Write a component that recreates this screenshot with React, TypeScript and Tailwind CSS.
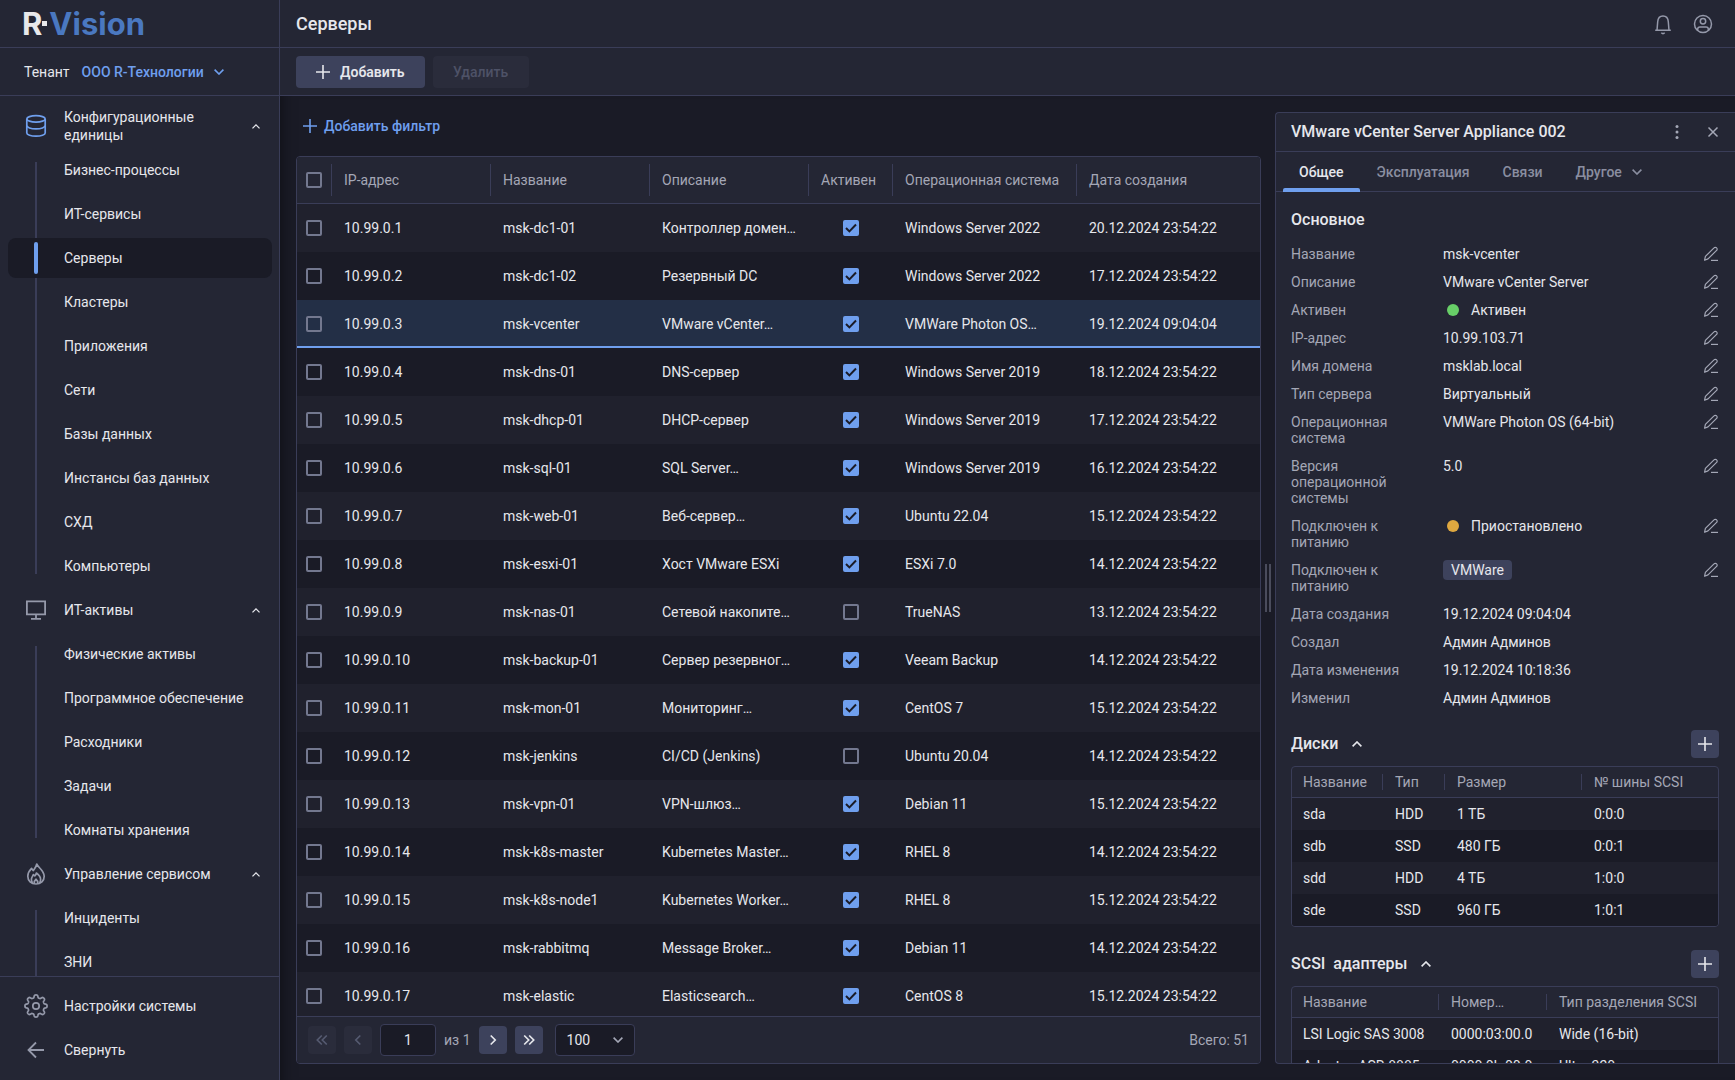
import type { ReactNode } from 'react';

type IconProps = { className?: string };

const Plus = ({ className = '' }: IconProps) => (
  <svg viewBox="0 0 14 14" className={`size-3.5 shrink-0 ${className}`} fill="none" stroke="currentColor" strokeWidth="1.6">
    <path d="M7 0v14M0 7h14" />
  </svg>
);

const Chevron = ({ className = '', size = 'h-1.5 w-2.5' }: IconProps & { size?: string }) => (
  <svg viewBox="0 0 10 6" className={`shrink-0 ${size} ${className}`} fill="none" stroke="currentColor" strokeWidth="1.6">
    <path d="M.6.6 5 5 9.4.6" />
  </svg>
);

const Pencil = () => (
  <svg viewBox="0 0 16 16" className="size-4" fill="none" stroke="currentColor" strokeWidth="1.2" strokeLinejoin="round">
    <path d="M1.6 14.2 2.4 10.400 11 1.9a1.700 1.700 0 0 1 2.600 0 1.700 1.700 0 0 1 0 2.500L5 12.900 1.6 14.2Z" />
    <path d="M8 14.4h7" />
  </svg>
);

const Database = () => (
  <svg viewBox="0 0 24 24" className="size-6 text-[#6f9fee]" fill="none" stroke="currentColor" strokeWidth="1.700">
    <ellipse cx="12" cy="4.900" rx="9.200" ry="3.200" />
    <path d="M2.800 4.900v14c0 1.800 4.100 3.300 9.200 3.300s9.200-1.500 9.200-3.300v-14" />
    <path d="M2.800 11.600c0 1.800 4.100 3.300 9.200 3.300s9.200-1.500 9.200-3.300" />
  </svg>
);

const Monitor = () => (
  <svg viewBox="0 0 24 24" className="size-6" fill="none" stroke="currentColor" strokeWidth="1.8">
    <path d="M2.9 3.4h18.2v13H2.9zM12 16.4v4M7 20.9h10" />
  </svg>
);

const Flame = () => (
  <svg viewBox="0 0 24 24" className="size-6" fill="none" stroke="currentColor" strokeWidth="1.7" strokeLinejoin="round">
    <path d="M12.8 2c.6 3 7.4 6.200 7.400 12.200 0 4.600-3.400 7.800-8.200 7.800s-8.200-3.200-8.200-7.800c0-3.400 1.800-5.800 3.800-7.800l1.600 2.200C10.400 6.800 12.400 4.600 12.800 2Z" />
    <path d="M8.600 21c-.8-1-1.200-2.200-1.200-3.400 0-2.400 1.400-3.400 2-5l1.400 1.200c.8-.8 1.400-1.600 1.600-2.800 2.200 1.600 4.200 3.800 4.200 6.400 0 1.400-.4 2.600-1.200 3.600" />
    <path d="M10.200 21.600c-.2-2.400.4-3.400 1.800-4.400 1.400 1 2 2 1.800 4.400" />
  </svg>
);

// Eight soft teeth: a flattened wave wrapped around a circle
const GEAR_POINTS = Array.from({ length: 160 }, (_, i) => {
  const angle = (i / 160) * Math.PI * 2;
  const radius = 9.7 + 1.4 * Math.tanh(2 * Math.cos(angle * 8));
  return `${(12 + radius * Math.sin(angle)).toFixed(2)},${(12 - radius * Math.cos(angle)).toFixed(2)}`;
}).join(' ');

const Gear = () => (
  <svg viewBox="0 0 24 24" className="size-6" fill="none" stroke="currentColor" strokeWidth="1.7" strokeLinejoin="round">
    <polygon points={GEAR_POINTS} />
    <circle cx="12" cy="12" r="3.2" />
  </svg>
);

const ArrowLeft = () => (
  <svg viewBox="0 0 24 24" className="size-6" fill="none" stroke="currentColor" strokeWidth="1.8">
    <path d="M12 4.500 4.500 12l7.500 7.500M4.500 12H20" />
  </svg>
);

interface NavGroup {
  title: string;
  icon: ReactNode;
  items: string[];
}

const NAV: NavGroup[] = [
  {
    title: 'Конфигурационные единицы',
    icon: <Database />,
    items: [
      'Бизнес-процессы',
      'ИТ-сервисы',
      'Серверы',
      'Кластеры',
      'Приложения',
      'Сети',
      'Базы данных',
      'Инстансы баз данных',
      'СХД',
      'Компьютеры',
    ],
  },
  {
    title: 'ИТ-активы',
    icon: <Monitor />,
    items: ['Физические активы', 'Программное обеспечение', 'Расходники', 'Задачи', 'Комнаты хранения'],
  },
  { title: 'Управление сервисом', icon: <Flame />, items: ['Инциденты', 'ЗНИ'] },
];

interface Server {
  ip: string;
  name: string;
  desc: string;
  active: boolean;
  os: string;
  created: string;
}

const server = (ip: string, name: string, desc: string, active: boolean, os: string, created: string): Server => ({
  ip,
  name,
  desc,
  active,
  os,
  created,
});

const SERVERS: Server[] = [
  server('10.99.0.1', 'msk-dc1-01', 'Контроллер домен…', true, 'Windows Server 2022', '20.12.2024 23:54:22'),
  server('10.99.0.2', 'msk-dc1-02', 'Резервный DC', true, 'Windows Server 2022', '17.12.2024 23:54:22'),
  server('10.99.0.3', 'msk-vcenter', 'VMware vCenter…', true, 'VMWare Photon OS…', '19.12.2024 09:04:04'),
  server('10.99.0.4', 'msk-dns-01', 'DNS-сервер', true, 'Windows Server 2019', '18.12.2024 23:54:22'),
  server('10.99.0.5', 'msk-dhcp-01', 'DHCP-сервер', true, 'Windows Server 2019', '17.12.2024 23:54:22'),
  server('10.99.0.6', 'msk-sql-01', 'SQL Server…', true, 'Windows Server 2019', '16.12.2024 23:54:22'),
  server('10.99.0.7', 'msk-web-01', 'Веб-сервер…', true, 'Ubuntu 22.04', '15.12.2024 23:54:22'),
  server('10.99.0.8', 'msk-esxi-01', 'Хост VMware ESXi', true, 'ESXi 7.0', '14.12.2024 23:54:22'),
  server('10.99.0.9', 'msk-nas-01', 'Сетевой накопите…', false, 'TrueNAS', '13.12.2024 23:54:22'),
  server('10.99.0.10', 'msk-backup-01', 'Сервер резервног…', true, 'Veeam Backup', '14.12.2024 23:54:22'),
  server('10.99.0.11', 'msk-mon-01', 'Мониторинг…', true, 'CentOS 7', '15.12.2024 23:54:22'),
  server('10.99.0.12', 'msk-jenkins', 'CI/CD (Jenkins)', false, 'Ubuntu 20.04', '14.12.2024 23:54:22'),
  server('10.99.0.13', 'msk-vpn-01', 'VPN-шлюз…', true, 'Debian 11', '15.12.2024 23:54:22'),
  server('10.99.0.14', 'msk-k8s-master', 'Kubernetes Master…', true, 'RHEL 8', '14.12.2024 23:54:22'),
  server('10.99.0.15', 'msk-k8s-node1', 'Kubernetes Worker…', true, 'RHEL 8', '15.12.2024 23:54:22'),
  server('10.99.0.16', 'msk-rabbitmq', 'Message Broker…', true, 'Debian 11', '14.12.2024 23:54:22'),
  server('10.99.0.17', 'msk-elastic', 'Elasticsearch…', true, 'CentOS 8', '15.12.2024 23:54:22'),
];

const SELECTED_IP = '10.99.0.3';

interface Field {
  label: string;
  value: ReactNode;
  editable?: boolean;
}

const FIELDS: Field[] = [
  { label: 'Название', value: 'msk-vcenter', editable: true },
  { label: 'Описание', value: 'VMware vCenter Server', editable: true },
  { label: 'Активен', value: <Status color="bg-[#68cf68]">Активен</Status>, editable: true },
  { label: 'IP-адрес', value: '10.99.103.71', editable: true },
  { label: 'Имя домена', value: 'msklab.local', editable: true },
  { label: 'Тип сервера', value: 'Виртуальный', editable: true },
  { label: 'Операционная система', value: 'VMWare Photon OS (64-bit)', editable: true },
  { label: 'Версия операционной системы', value: '5.0', editable: true },
  { label: 'Подключен к питанию', value: <Status color="bg-[#dfa840]">Приостановлено</Status>, editable: true },
  {
    label: 'Подключен к питанию',
    value: <span className="-my-0.5 inline-block rounded bg-[#3d425c] px-2 leading-5">VMWare</span>,
    editable: true,
  },
  { label: 'Дата создания', value: '19.12.2024 09:04:04' },
  { label: 'Создал', value: 'Админ Админов' },
  { label: 'Дата изменения', value: '19.12.2024 10:18:36' },
  { label: 'Изменил', value: 'Админ Админов' },
];

function Status({ color, children }: { color: string; children: ReactNode }) {
  return (
    <span className="flex items-center gap-3 pl-1">
      <span className={`size-3 rounded-full ${color}`} />
      {children}
    </span>
  );
}

function Checkbox({ label, checked = false }: { label: string; checked?: boolean }) {
  return (
    <span className="relative block size-4">
      <input
        type="checkbox"
        aria-label={label}
        defaultChecked={checked}
        className="peer block size-4 appearance-none rounded-xs border-2 border-[#73788f] checked:border-[#6f9fee] checked:bg-[#6f9fee]"
      />
      <svg
        viewBox="0 0 16 16"
        className="pointer-events-none absolute inset-0 hidden size-4 text-[#1a1b26] peer-checked:block"
        fill="none"
        stroke="currentColor"
        strokeWidth="2"
      >
        <path d="m3 8 3.400 3.400L13 4.500" />
      </svg>
    </span>
  );
}

function Logo() {
  return (
    <a
      href="#"
      aria-label="R-Vision"
      className="flex items-center font-[Inter,sans-serif] text-[31px] leading-none font-bold text-[#e8e8ea]"
    >
      R
      <span className="mr-0.5 size-[5px] bg-[#e8e8ea]" />
      <span className="text-[#4a78c0]">Vision</span>
    </a>
  );
}

function Sidebar() {
  return (
    <aside className="flex w-70 shrink-0 flex-col border-r border-[#3a3d58] bg-[#242634]">
      <div className="flex h-12 shrink-0 items-center border-b border-[#3a3d58] pl-[22px]">
        <Logo />
      </div>
      <div className="flex h-12 shrink-0 items-center gap-3 border-b border-[#3a3d58] px-6">
        <span>Тенант</span>
        <button type="button" className="flex items-center gap-2.5 font-medium text-[#6f9fee]">
          ООО R-Технологии
          <Chevron />
        </button>
      </div>

      <nav className="min-h-0 flex-1 overflow-hidden pt-2">
        {NAV.map((group) => (
          <section key={group.title} className="group">
            <button type="button" className="flex h-11 w-full items-center pr-[19px] pl-6 text-left text-[#9599aa]">
              {group.icon}
              <span className="ml-4 w-40 leading-[18px] text-[#e6e7ec]">{group.title}</span>
              <Chevron size="h-[5px] w-2" className="ml-auto rotate-180 text-[#e6e7ec]" />
            </button>
            <ul className="relative pr-[7px] pl-2">
              <span className="absolute inset-y-3.5 left-[35px] w-0.5 bg-[#3a3d58] group-last:bottom-0" />
              {group.items.map((item) => {
                const current = item === 'Серверы';
                return (
                  <li key={item} className="py-0.5">
                    <a
                      href="#"
                      aria-current={current ? 'page' : undefined}
                      className={`relative flex h-10 items-center rounded-lg pl-14 ${current ? 'bg-[#1a1b26]' : ''}`}
                    >
                      {current && <span className="absolute inset-y-1 left-[26px] w-1 rounded-xs bg-[#6f9fee]" />}
                      {item}
                    </a>
                  </li>
                );
              })}
            </ul>
          </section>
        ))}
      </nav>

      <div className="shrink-0 border-t border-[#3a3d58] pt-[7px] pb-2">
        <a href="#" className="flex h-11 items-center gap-4 px-6">
          <span className="text-[#9599aa]">
            <Gear />
          </span>
          Настройки системы
        </a>
        <button type="button" className="flex h-11 w-full items-center gap-4 px-6">
          <span className="text-[#9599aa]">
            <ArrowLeft />
          </span>
          Свернуть
        </button>
      </div>
    </aside>
  );
}

function Topbar() {
  return (
    <header className="flex h-12 shrink-0 items-center justify-between border-b border-[#3a3d58] bg-[#242634] px-4">
      <h1 className="text-lg font-medium">Серверы</h1>
      <div className="flex items-center gap-4 pr-1 text-[#9599aa]">
        <button type="button" aria-label="Уведомления">
          <svg viewBox="0 0 24 24" className="size-6" fill="none" stroke="currentColor" strokeWidth="1.5">
            <path d="M4.200 18.200h15.600M6 18.200l.7-8.400C7 6 9 4 12 4S17 6 17.300 9.800l.7 8.400" />
            <path d="M10.300 20.800c.9.900 2.500.9 3.400 0" />
          </svg>
        </button>
        <button type="button" aria-label="Профиль">
          <svg viewBox="0 0 24 24" className="size-6" fill="none" stroke="currentColor" strokeWidth="1.500">
            <circle cx="12" cy="12" r="8.500" />
            <circle cx="12" cy="9.200" r="2.700" />
            <path d="M6.700 18.500v-1.300c0-1.400 1-2.200 2.300-2.200h6c1.300 0 2.300.8 2.300 2.200v1.300" />
          </svg>
        </button>
      </div>
    </header>
  );
}

const HEADERS = ['IP-адрес', 'Название', 'Описание', 'Активен', 'Операционная система', 'Дата создания'];

function Separator({ className }: { className: string }) {
  return <span className={`absolute right-0 w-px bg-[#3a3d58] ${className}`} />;
}

function ServersTable() {
  return (
    <div className="flex min-h-0 flex-1 flex-col overflow-hidden rounded border border-[#3a3d58]">
      <div className="min-h-0 flex-1 overflow-hidden">
        <table className="w-full table-fixed border-separate border-spacing-0 text-left">
          <colgroup>
            <col className="w-[35px]" />
            <col className="w-[159px]" />
            <col className="w-[159px]" />
            <col className="w-[159px]" />
            <col className="w-[84px]" />
            <col className="w-[184px]" />
            <col />
          </colgroup>
          <thead className="bg-[#242634] text-[#a4a7b6]">
            <tr className="h-[47px]">
              <th className="relative border-b border-[#3a3d58] pl-[9px]">
                <Checkbox label="Выбрать все" />
                <Separator className="inset-y-[7px]" />
              </th>
              {HEADERS.map((title, i) => (
                <th key={title} className="relative border-b border-[#3a3d58] pl-3 font-normal whitespace-nowrap">
                  {title}
                  {i < HEADERS.length - 1 && <Separator className="inset-y-[7px]" />}
                </th>
              ))}
            </tr>
          </thead>
          <tbody>
            {SERVERS.map((s) => (
              <tr
                key={s.ip}
                className={
                  s.ip === SELECTED_IP
                    ? 'h-12 bg-[#232f46] shadow-[inset_0_-2px_0_#6f9fee]'
                    : 'h-12 odd:bg-[#20212d] even:bg-[#1a1b26]'
                }
              >
                <td className="pl-[9px]">
                  <Checkbox label={s.name} />
                </td>
                <td className="pl-3">{s.ip}</td>
                <td className="pl-3">{s.name}</td>
                <td className="pl-3 whitespace-nowrap">{s.desc}</td>
                <td>
                  <div className="flex justify-center">
                    <Checkbox label="Активен" checked={s.active} />
                  </div>
                </td>
                <td className="pl-3">{s.os}</td>
                <td className="pl-3">{s.created}</td>
              </tr>
            ))}
          </tbody>
        </table>
      </div>
      <Pagination />
    </div>
  );
}

function PageButton({ label, double, back }: { label: string; double?: boolean; back?: boolean }) {
  return (
    <button
      type="button"
      aria-label={label}
      disabled={back}
      className="flex size-7 items-center justify-center rounded bg-[#3d425c] text-[#e6e7ec] disabled:bg-[#2a2c3b] disabled:text-[#555a70]"
    >
      <svg
        viewBox="0 0 12 12"
        className={`size-3 ${back ? 'rotate-180' : ''}`}
        fill="none"
        stroke="currentColor"
        strokeWidth="1.700"
      >
        <path d={double ? 'm1.200 1.500 4.500 4.500-4.500 4.500M6.200 1.500 10.700 6l-4.500 4.500' : 'M3.700 1.500 8.200 6l-4.500 4.500'} />
      </svg>
    </button>
  );
}

function Pagination() {
  return (
    <div className="flex h-[47px] shrink-0 items-center gap-2 border-t border-[#3a3d58] bg-[#242634] px-[11px]">
      <PageButton label="Первая страница" double back />
      <PageButton label="Предыдущая страница" back />
      <input
        aria-label="Страница"
        defaultValue="1"
        className="h-8 w-14 rounded border border-[#3a3d58] bg-[#1a1b26] text-center"
      />
      <span className="text-[#a4a7b6]">из 1</span>
      <PageButton label="Следующая страница" />
      <PageButton label="Последняя страница" double />
      <div className="relative ml-1">
        <select
          aria-label="Строк на странице"
          className="h-8 w-20 appearance-none rounded border border-[#3a3d58] bg-[#1a1b26] pl-[11px]"
        >
          <option>100</option>
          <option>50</option>
        </select>
        <Chevron className="pointer-events-none absolute top-[13px] right-3 text-[#a4a7b6]" />
      </div>
      <span className="ml-auto text-[#a4a7b6]">Всего: 51</span>
    </div>
  );
}

interface MiniTableProps {
  columns: { title: string; width: string }[];
  rows: string[][];
}

function MiniTable({ columns, rows }: MiniTableProps) {
  return (
    <div className="mt-2 overflow-hidden rounded border border-[#3a3d58]">
      <table className="w-full table-fixed border-separate border-spacing-0 text-left whitespace-nowrap">
        <thead className="text-[#a4a7b6]">
          <tr className="h-[31px]">
            {columns.map((c, i) => (
              <th
                key={c.title}
                className={`relative border-b border-[#3a3d58] pl-3 font-normal first:pl-[11px] ${c.width}`}
              >
                {c.title}
                {i < columns.length - 1 && <Separator className="inset-y-[7px]" />}
              </th>
            ))}
          </tr>
        </thead>
        <tbody>
          {rows.map((row) => (
            <tr key={row[0]} className="h-8 odd:bg-[#20212d] even:bg-[#1a1b26]">
              {row.map((cell, i) => (
                <td key={i} className="pl-3 first:pl-[11px]">
                  {cell}
                </td>
              ))}
            </tr>
          ))}
        </tbody>
      </table>
    </div>
  );
}

function Section({ title, className, children }: { title: string; className: string; children: ReactNode }) {
  return (
    <section className={className}>
      <div className="flex h-7 items-center justify-between">
        <h3 className="text-base font-medium whitespace-pre">
          <button type="button" className="flex items-center gap-3.5">
            {title}
            <Chevron className="rotate-180" />
          </button>
        </h3>
        <button
          type="button"
          aria-label={`Добавить: ${title}`}
          className="flex size-7 items-center justify-center rounded bg-[#3d425c]"
        >
          <Plus />
        </button>
      </div>
      {children}
    </section>
  );
}

function DetailsPanel() {
  return (
    <aside className="mt-4 mb-4 flex w-[460px] shrink-0 flex-col overflow-hidden rounded-l border border-r-0 border-[#3a3d58] bg-[#242634]">
      <div className="flex h-[39px] shrink-0 items-center border-b border-[#3a3d58] pr-4 pl-[15px]">
        <h2 className="flex-1 text-base font-medium">VMware vCenter Server Appliance 002</h2>
        <button type="button" aria-label="Ещё" className="mr-6 text-[#a4a7b6]">
          <svg viewBox="0 0 12 16" className="h-4 w-3" fill="currentColor">
            <circle cx="6" cy="2.400" r="1.500" />
            <circle cx="6" cy="8" r="1.500" />
            <circle cx="6" cy="13.600" r="1.500" />
          </svg>
        </button>
        <button type="button" aria-label="Закрыть" className="text-[#a4a7b6]">
          <svg viewBox="0 0 12 12" className="size-3" fill="none" stroke="currentColor" strokeWidth="1.500">
            <path d="m1.500 1.500 9 9M10.500 1.500l-9 9" />
          </svg>
        </button>
      </div>

      <div role="tablist" className="flex h-10 shrink-0 gap-px border-b border-[#3a3d58] pl-[7px] font-medium text-[#8a8ea0]">
        <button type="button" role="tab" aria-selected className="relative px-4 text-[#e6e7ec]">
          Общее
          <span className="absolute inset-x-0 -bottom-px h-1 rounded-t-xs bg-[#6f9fee]" />
        </button>
        <button type="button" role="tab" className="px-4">
          Эксплуатация
        </button>
        <button type="button" role="tab" className="px-4">
          Связи
        </button>
        <button type="button" role="tab" className="flex items-center gap-2.5 px-4">
          Другое
          <Chevron />
        </button>
      </div>

      <div className="min-h-0 flex-1 overflow-hidden pt-4 pr-4 pl-[15px]">
        <h3 className="mb-2 text-base leading-6 font-medium">Основное</h3>
        <dl>
          {FIELDS.map((f, i) => (
            <div key={i} className="flex items-start py-1.5 leading-4">
              <dt className="mr-10 w-28 text-[#a4a7b6]">{f.label}</dt>
              <dd className="flex-1">{f.value}</dd>
              {f.editable && (
                <button type="button" aria-label={`Изменить: ${f.label}`} className="text-[#a4a7b6]">
                  <Pencil />
                </button>
              )}
            </div>
          ))}
        </dl>

        <Section title="Диски" className="mt-[18px]">
          <MiniTable
            columns={[
              { title: 'Название', width: 'w-[91px]' },
              { title: 'Тип', width: 'w-[62px]' },
              { title: 'Размер', width: 'w-[137px]' },
              { title: '№ шины SCSI', width: '' },
            ]}
            rows={[
              ['sda', 'HDD', '1 ТБ', '0:0:0'],
              ['sdb', 'SSD', '480 ГБ', '0:0:1'],
              ['sdd', 'HDD', '4 ТБ', '1:0:0'],
              ['sde', 'SSD', '960 ГБ', '1:0:1'],
            ]}
          />
        </Section>

        <Section title="SCSI  адаптеры" className="mt-[23px]">
          <MiniTable
            columns={[
              { title: 'Название', width: 'w-[147px]' },
              { title: 'Номер…', width: 'w-[108px]' },
              { title: 'Тип разделения SCSI', width: '' },
            ]}
            rows={[
              ['LSI Logic SAS 3008', '0000:03:00.0', 'Wide (16-bit)'],
              ['Adaptec ASR-8885', '0000:0b:00.0', 'Ultra 320'],
            ]}
          />
        </Section>
      </div>
    </aside>
  );
}

export default function App() {
  return (
    <div className="flex h-screen overflow-hidden bg-[#1a1b26] font-[Roboto,sans-serif] text-sm text-[#e6e7ec]">
      <Sidebar />
      <div className="flex min-w-0 flex-1 flex-col">
        <Topbar />
        <div className="flex h-12 shrink-0 items-center gap-2 border-b border-[#3a3d58] bg-[#242634] px-4">
          <button type="button" className="flex h-8 items-center gap-2.5 rounded bg-[#3d425c] px-5 font-semibold">
            <Plus />
            Добавить
          </button>
          <button type="button" disabled className="h-8 w-24 rounded bg-[#2a2c3b] font-medium text-[#4e5267]">
            Удалить
          </button>
        </div>

        <div className="flex min-h-0 flex-1 shadow-[inset_16px_0_16px_-16px_rgba(0,0,0,0.5)]">
          <main className="flex min-w-0 flex-1 flex-col pb-4 pl-4">
            <div className="flex h-15 shrink-0 items-center pl-[7px]">
              <button type="button" className="flex items-center gap-[7px] font-medium text-[#6f9fee]">
                <Plus />
                Добавить фильтр
              </button>
            </div>
            <ServersTable />
          </main>
          <div role="separator" className="flex w-3.5 shrink-0 cursor-col-resize items-center justify-center gap-0.5">
            <span className="h-12 w-0.5 bg-[#4a4c5c]" />
            <span className="h-12 w-0.5 bg-[#4a4c5c]" />
          </div>
          <DetailsPanel />
        </div>
      </div>
    </div>
  );
}
